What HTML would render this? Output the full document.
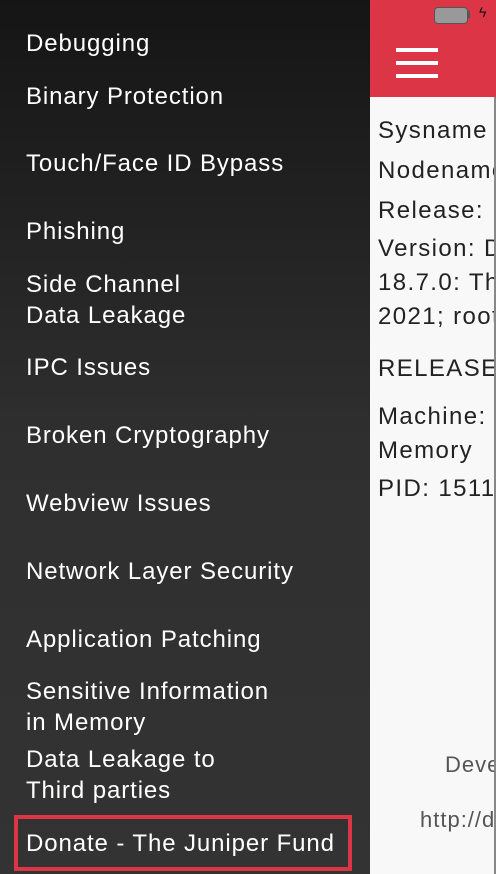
<!DOCTYPE html>
<html><head><meta charset="utf-8"><style>
*{margin:0;padding:0}
body{width:496px;height:874px;overflow:hidden;position:relative;font-family:"Liberation Sans",sans-serif;background:#f8f8f8}
#left{position:absolute;left:0;top:0;width:370px;height:874px;background:linear-gradient(#151515,#2f2f2f 50%,#333 100%)}
.m{position:absolute;left:26px;color:#fff;font-size:24px;letter-spacing:0.9px;line-height:31px;white-space:nowrap}
#hdr{position:absolute;left:370px;top:0;width:126px;height:97px;background:#dc3545}
.bar{position:absolute;left:396px;width:42px;height:4px;background:#fff}
#rc{position:absolute;left:370px;top:97px;width:124px;height:777px;overflow:hidden}
.r{position:absolute;left:8px;color:#222;font-size:24px;letter-spacing:1.4px;white-space:nowrap;line-height:30px}
.g{position:absolute;color:#555;font-size:22px;letter-spacing:1px;white-space:nowrap;line-height:30px}
</style></head><body>
<div id="hdr"></div>
<div style="position:absolute;left:434px;top:7px;width:32px;height:15px;border:1px solid #555;border-radius:4px;background:#999"></div>
<div style="position:absolute;left:468px;top:11px;width:2px;height:7px;background:#555"></div>
<div style="position:absolute;left:479px;top:4px;font-size:14px;color:#111">ϟ</div>
<div class="bar" style="top:48px"></div><div class="bar" style="top:61px"></div><div class="bar" style="top:74px"></div>
<div id="rc">
<div class="r" style="top:19px">Sysname</div>
<div class="r" style="top:59px">Nodename</div>
<div class="r" style="top:99px">Release:</div>
<div class="r" style="top:137px">Version: Darwin</div>
<div class="r" style="top:171px">18.7.0: Thu</div>
<div class="r" style="top:205px">2021; root</div>
<div class="r" style="top:257px">RELEASE</div>
<div class="r" style="top:305px">Machine:</div>
<div class="r" style="top:339px">Memory</div>
<div class="r" style="top:377px">PID: 1511</div>
<div class="g" style="left:75px;top:653px">Developer</div>
<div class="g" style="left:50px;top:708px">http://damn</div>
</div>
<div style="position:absolute;left:494px;top:97px;width:2px;height:777px;background:#888"></div>
<div id="left"></div>
<div class="m" style="top:28px">Debugging</div>
<div class="m" style="top:81px">Binary Protection</div>
<div class="m" style="top:148px">Touch/Face ID Bypass</div>
<div class="m" style="top:216px">Phishing</div>
<div class="m" style="top:269px">Side Channel<br>Data Leakage</div>
<div class="m" style="top:352px">IPC Issues</div>
<div class="m" style="top:420px">Broken Cryptography</div>
<div class="m" style="top:488px">Webview Issues</div>
<div class="m" style="top:556px">Network Layer Security</div>
<div class="m" style="top:624px">Application Patching</div>
<div class="m" style="top:676px">Sensitive Information<br>in Memory</div>
<div class="m" style="top:744px">Data Leakage to<br>Third parties</div>
<div style="position:absolute;left:14px;top:815px;width:330px;height:48px;border:4px solid #dc3545"></div>
<div class="m" style="top:828px">Donate - The Juniper Fund</div>
</body></html>
